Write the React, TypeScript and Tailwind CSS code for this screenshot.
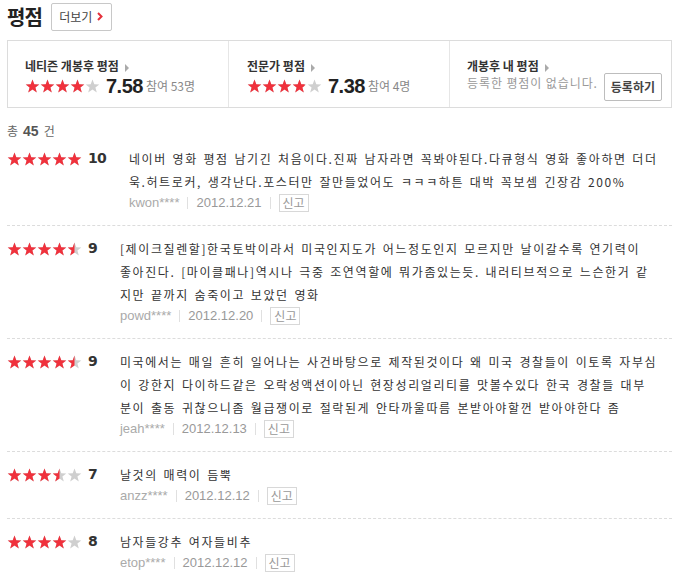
import React from "react";

const KR = { fontFamily: '"Noto Sans CJK KR", "Liberation Sans", sans-serif' };
const LAT = { fontFamily: '"Liberation Sans", "Noto Sans CJK KR", sans-serif' };

// one star; fill is 0..1 of red from the left
function Star({ fill, id }: { fill: number; id: string }) {
  const d = "M7.5 0.6 L9.3 5.3 L14.3 5.4 L10.4 8.5 L11.8 13.4 L7.5 10.6 L3.2 13.4 L4.6 8.5 L0.7 5.4 L5.7 5.3 Z";
  return (
    <svg width="15" height="14" viewBox="0 0 15 14" className="block">
      <defs>
        <clipPath id={id}>
          <rect x="0" y="0" width={15 * fill} height="14" />
        </clipPath>
      </defs>
      <path d={d} fill="#cfcfcf" />
      <path d={d} fill="#f0313c" clipPath={`url(#${id})`} />
    </svg>
  );
}

function Stars({ score, name }: { score: number; name: string }) {
  const v = score / 2;
  return (
    <div className="flex">
      {[0, 1, 2, 3, 4].map((i) => (
        <Star key={i} id={`${name}-${i}`} fill={Math.max(0, Math.min(1, v - i))} />
      ))}
    </div>
  );
}

// lines kept as the original wraps them
const reviews = [
  {
    score: 10,
    lines: [
      "네이버 영화 평점 남기긴 처음이다.진짜 남자라면 꼭봐야된다.다큐형식 영화 좋아하면 더더",
      "욱.허트로커, 생각난다.포스터만 잘만들었어도 ㅋㅋㅋ하튼 대박 꼭보셈 긴장감 200%",
    ],
    user: "kwon****",
    date: "2012.12.21",
  },
  {
    score: 9,
    lines: [
      "[제이크질렌할]한국토박이라서 미국인지도가 어느정도인지 모르지만 날이갈수록 연기력이",
      "좋아진다. [마이클패나]역시나 극중 조연역할에 뭐가좀있는듯. 내러티브적으로 느슨한거 같",
      "지만 끝까지 숨죽이고 보았던 영화",
    ],
    user: "powd****",
    date: "2012.12.20",
  },
  {
    score: 9,
    lines: [
      "미국에서는 매일 흔히 일어나는 사건바탕으로 제작된것이다 왜 미국 경찰들이 이토록 자부심",
      "이 강한지 다이하드같은 오락성액션이아닌 현장성리얼리티를 맛볼수있다 한국 경찰들 대부",
      "분이 출동 귀찮으니좀 월급쟁이로 절락된게 안타까울따름 본받아야할껀 받아야한다 좀",
    ],
    user: "jeah****",
    date: "2012.12.13",
  },
  { score: 7, lines: ["날것의 매력이 듬뿍"], user: "anzz****", date: "2012.12.12" },
  { score: 8, lines: ["남자들강추 여자들비추"], user: "etop****", date: "2012.12.12" },
];

function Arrow() {
  return <span className="inline-block ml-[6px] align-middle w-0 h-0 border-y-[4px] border-y-transparent border-l-[4px] border-l-[#aaa]" />;
}

export default function App() {
  return (
    <div className="w-[683px] h-[580px] bg-white text-[#333] overflow-hidden" style={KR}>
      <div className="ml-[7px] w-[665px]">
        {/* header */}
        <div className="flex items-center h-[32px] gap-[9px] pt-[1px]">
          <h2 className="text-[20px] font-bold tracking-[-1px] text-[#222] leading-none">평점</h2>
          <button className="h-[28px] w-[61px] border border-[#c8c8c8] rounded-[2px] text-[12px] text-[#444] flex items-center justify-center gap-[5px]">
            더보기
            <svg width="6" height="9" viewBox="0 0 6 9" className="block">
              <path d="M1 1 L4.5 4.5 L1 8" stroke="#e5303b" strokeWidth="2" fill="none" />
            </svg>
          </button>
        </div>

        {/* summary */}
        <div className="mt-[8px] h-[68px] border border-[#dcdcdc] grid grid-cols-[221px_221px_1fr]">
          <div className="border-r border-[#e6e6e6] pl-[17px] pt-[16px]">
            <div className="text-[12px] font-bold text-[#333] leading-[17px]">
              네티즌 개봉후 평점<Arrow />
            </div>
            <div className="flex items-center mt-[1px]">
              <Stars score={8} name="s1" />
              <span className="ml-[6px] text-[20px] font-bold text-[#222] tracking-[-0.5px] leading-[22px]" style={LAT}>7.58</span>
              <span className="ml-[3px] text-[12px] text-[#888]">참여 53명</span>
            </div>
          </div>
          <div className="border-r border-[#e6e6e6] pl-[18px] pt-[16px]">
            <div className="text-[12px] font-bold text-[#333] leading-[17px]">
              전문가 평점<Arrow />
            </div>
            <div className="flex items-center mt-[1px]">
              <Stars score={7.7} name="s2" />
              <span className="ml-[6px] text-[20px] font-bold text-[#222] tracking-[-0.5px] leading-[22px]" style={LAT}>7.38</span>
              <span className="ml-[3px] text-[12px] text-[#888]">참여 4명</span>
            </div>
          </div>
          <div className="pl-[17px] pt-[16px]">
            <div className="text-[12px] font-bold text-[#333] leading-[17px]">
              개봉후 내 평점<Arrow />
            </div>
            <div className="flex items-start">
              <span className="text-[12px] text-[#999] leading-[18px] tracking-[0.9px]">등록한 평점이 없습니다.</span>
              <button className="ml-[6px] mt-[-1px] h-[28px] px-[6px] border border-[#bdbdbd] rounded-[2px] text-[12px] font-bold text-[#444]">등록하기</button>
            </div>
          </div>
        </div>

        {/* count */}
        <div className="mt-[13px] h-[20px] flex items-center text-[12px] text-[#666]">
          총<span className="mx-[5px] text-[14px] font-bold text-[#555]" style={LAT}>45</span>건
        </div>

        {/* list */}
        <ul>
          {reviews.map((r, i) => (
            <li key={i} className={`flex ${i === 0 ? "pt-[6px]" : "pt-[11px]"} pb-[12px] border-b border-dashed border-[#dcdcdc]`}>
              <div className="flex items-center h-[23px] shrink-0">
                <Stars score={r.score} name={`r${i}`} />
                <span className="ml-[6px] text-[14px] font-bold text-[#333] tracking-[-0.8px]" style={{ fontFamily: '"DejaVu Sans", sans-serif' }}>{r.score}</span>
              </div>
              <div className="ml-[23px] flex-1">
                <div className="text-[12px] leading-[23px] text-[#333] tracking-[1.6px] [word-spacing:1.4px]">
                  {r.lines.map((l, j) => (
                    <div key={j} className="whitespace-nowrap">{l}</div>
                  ))}
                </div>
                <div className="flex items-center h-[20px] text-[13px] text-[#aaa]" style={LAT}>
                  <span>{r.user}</span>
                  <span className="mx-[8px] w-px h-[12px] bg-[#e0e0e0]" />
                  <span className="text-[#999]">{r.date}</span>
                  <span className="mx-[8px] w-px h-[12px] bg-[#e0e0e0]" />
                  <span className="border border-[#d8d8d8] px-[3px] leading-[16px] text-[12px] text-[#999]" style={KR}>신고</span>
                </div>
              </div>
            </li>
          ))}
        </ul>
      </div>
    </div>
  );
}
